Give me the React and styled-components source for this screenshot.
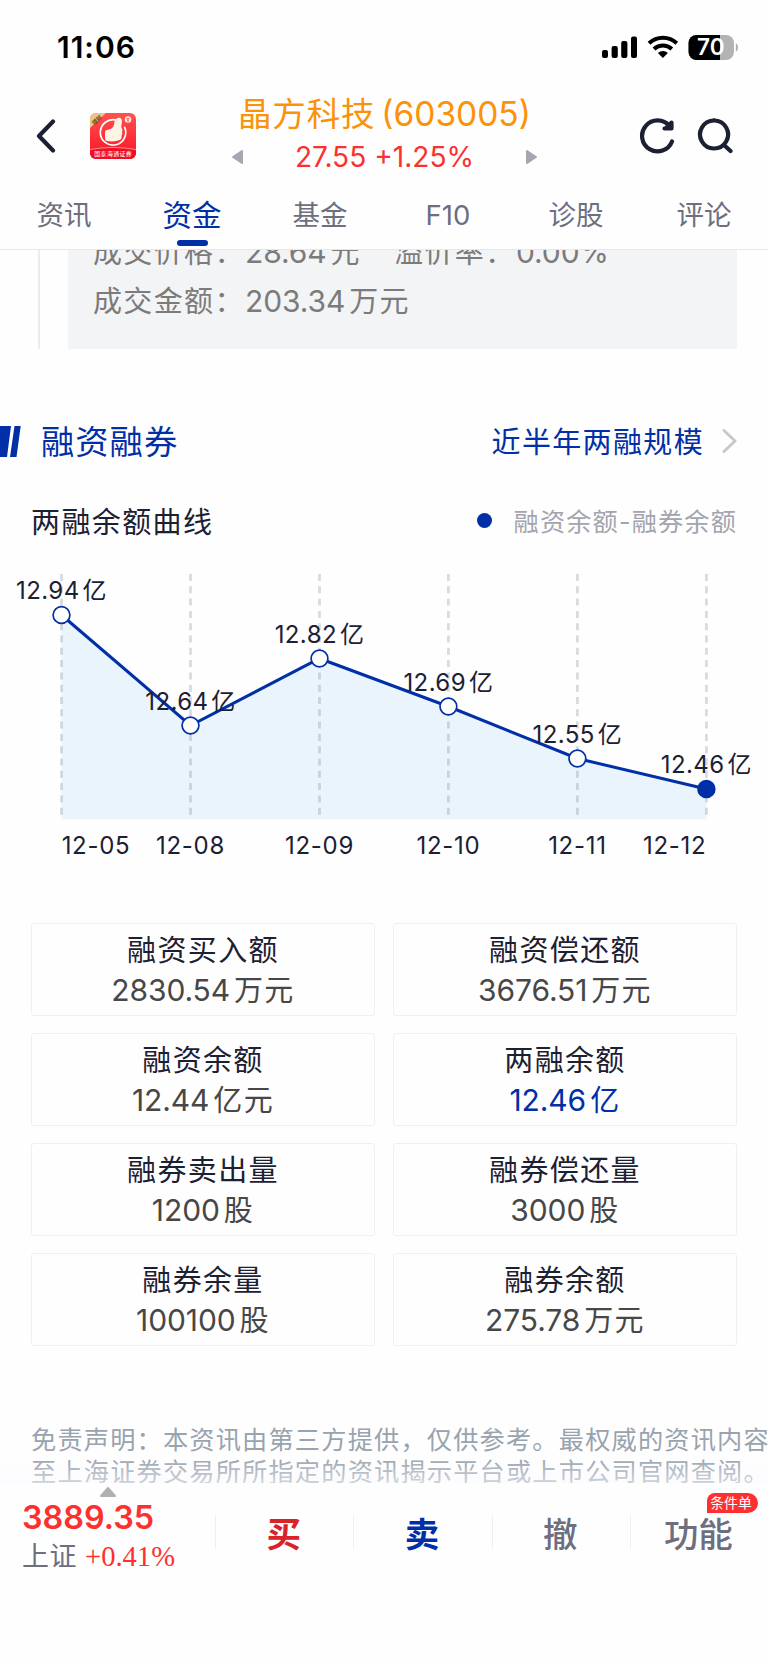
import React from 'react'
import styled, { createGlobalStyle } from 'styled-components'

const GlobalStyle = createGlobalStyle`
  * {
    box-sizing: border-box;
  }
  body {
    margin: 0;
    background: #fefefe;
    font-family: Inter, 'Noto Sans CJK SC', sans-serif;
    color: #1c2033;
  }
`
const Page = styled.div`
  width: 768px;
  height: 1663px;
  display: flex;
  flex-direction: column;
  overflow: hidden;
  white-space: nowrap;
`
const StatusBar = styled.div`
  height: 94px;
  padding: 0 30px 0 57px;
  display: flex;
  align-items: center;
  justify-content: space-between;
  color: #000;
`
const Clock = styled.div`
  font-size: 30px;
  font-weight: 600;
  letter-spacing: 1px;
`
const Header = styled.header`
  height: 84px;
  margin-bottom: 8px;
  padding: 0 35px 0 36px;
  display: flex;
  align-items: center;
  svg {
    display: block;
  }
`
const HeaderSide = styled.div`
  width: 168px;
  height: 84px;
  padding-bottom: 1px;
  display: flex;
  align-items: center;
  gap: ${p => p.gap}px;
  justify-content: ${p => (p.right ? 'flex-end' : 'flex-start')};
`
const Stock = styled.div`
  flex: 1;
  display: flex;
  flex-direction: column;
  align-items: center;
  padding-bottom: 3px;
`
const StockName = styled.div`
  height: 45px;
  display: flex;
  align-items: baseline;
  line-height: 44px;
  font-size: 33.5px;
  letter-spacing: 0.8px;
  color: #fb9207;
  span {
    margin-left: 6px;
    font-size: 33.5px;
    letter-spacing: 0;
  }
`
const StockPrice = styled.div`
  width: 307px;
  height: 40px;
  display: flex;
  align-items: center;
  justify-content: space-between;
  font-size: 28.1px;
  color: #fc312f;
`
const Tabs = styled.nav`
  height: 64px;
  display: grid;
  grid-template-columns: repeat(6, 1fr);
  border-bottom: 1px solid #e6e7e9;
`
const Tab = styled.div`
  display: flex;
  flex-direction: column;
  align-items: center;
  justify-content: space-between;
  padding-bottom: 3px;
  line-height: 59px;
  font-size: ${p => (p.active ? 29.5 : 27.5)}px;
  color: ${p => (p.active ? '#002fa7' : '#6d6f7e')};
  &::after {
    content: '';
    width: 31px;
    height: 6px;
    flex: none;
    margin-top: -5px;
    border-radius: 3px;
    background: ${p => (p.active ? '#002fa7' : 'transparent')};
  }
`
const Content = styled.main`
  height: 1233px;
  position: relative;
  overflow: hidden;
`
const TradeRecord = styled.div`
  height: 99px;
  margin: 0 31px 0 38px;
  padding-left: 28px;
  border-left: 2px solid #ebecee;
`
const TradeBox = styled.div`
  height: 99px;
  display: flex;
  flex-direction: column;
  justify-content: flex-end;
  padding: 0 24px 23px 25px;
  overflow: hidden;
  background: #f3f4f6;
  color: #7b7b7b;
  font-size: 29px;
  line-height: 49px;
`
const TradeLine = styled.div`
  display: flex;
  flex: none;
`
const TradeField = styled.span`
  width: ${p => p.w}px;
  letter-spacing: 1.35px;
`
const Value = styled.span`
  font-size: 30px;
  letter-spacing: -0.1px;
  small {
    margin-left: 4px;
    font-size: 29px;
    letter-spacing: 1.35px;
  }
`
const SectionHead = styled.div`
  height: 54px;
  margin-top: 65px;
  padding-right: 31px;
  display: flex;
  align-items: center;
`
const SectionTitle = styled.h2`
  flex: 1;
  margin: 0 0 0 20px;
  padding-bottom: 3px;
  font-size: 33.3px;
  font-weight: 400;
  letter-spacing: 1px;
  color: #002fa7;
`
const SectionLink = styled.a`
  margin-right: 18px;
  padding-bottom: 2px;
  font-size: 29px;
  letter-spacing: 1.35px;
  color: #002fa7;
`
const ChartHead = styled.div`
  height: 56px;
  margin-top: 24px;
  padding: 0 31px;
  display: flex;
  align-items: center;
  font-size: 29px;
  letter-spacing: 1.4px;
`
const Legend = styled.div`
  margin-left: auto;
  display: flex;
  align-items: center;
  gap: 22px;
  font-size: 25.2px;
  letter-spacing: 1.15px;
  color: #a3a4ad;
  &::before {
    content: '';
    width: 15px;
    height: 15px;
    border-radius: 50%;
    background: #002fa7;
  }
`
const ChartSvg = styled.svg`
  display: block;
  margin-top: 21px;
  font-size: 24px;
  fill: #1c2033;
`
const Grid = styled.div`
  margin: 58px 31px 0;
  display: grid;
  grid-template-columns: 1fr 1fr;
  gap: 17px 18px;
`
const Card = styled.div`
  height: 93px;
  padding-top: 6px;
  display: flex;
  flex-direction: column;
  align-items: center;
  border: 1.5px solid #f0f0f2;
  border-radius: 3px;
`
const CardTitle = styled.div`
  height: 40px;
  line-height: 41px;
  font-size: 29px;
  letter-spacing: 1.35px;
`
const CardValue = styled.div`
  height: 40px;
  line-height: 40px;
  color: ${p => (p.blue ? '#002fa7' : '#474747')};
`
const Disclaimer = styled.p`
  margin: 78px 0 0 31px;
  font-size: 25.2px;
  line-height: 32px;
  letter-spacing: 1.2px;
  color: #98a3ae;
`
const Fade = styled.div`
  position: absolute;
  left: 0;
  right: 0;
  bottom: 0;
  height: 26px;
  background: linear-gradient(rgba(250, 250, 254, 0), rgba(250, 250, 254, 0.55));
`
const BottomBar = styled.footer`
  height: 180px;
  padding-left: 22px;
  display: flex;
  background: #fefefe;
`
const IndexBox = styled.div`
  width: 193px;
  padding-top: 3px;
`
const IndexArrow = styled.svg`
  display: block;
  margin-left: 77px;
`
const IndexValue = styled.div`
  height: 41px;
  line-height: 40px;
  font-size: 32.3px;
  font-weight: 600;
  color: #fc312f;
`
const IndexName = styled.div`
  display: flex;
  align-items: baseline;
  line-height: 36px;
  font-size: 27px;
  letter-spacing: 0.5px;
  color: #6d6f7e;
  span {
    margin-left: 8px;
    font: 28.6px 'Liberation Serif', serif;
    letter-spacing: 0;
    color: #fc312f;
  }
`
const Action = styled.div`
  position: relative;
  flex: 1;
  height: 34px;
  margin-top: 32px;
  padding-right: 2px;
  border-left: 1px solid #efeff5;
  display: flex;
  align-items: center;
  justify-content: center;
  font-size: 34.5px;
  font-weight: ${p => p.weight || 500};
  color: ${p => p.color || '#6d6f7e'};
`
const Badge = styled.span`
  position: absolute;
  top: -22px;
  right: 10px;
  width: 51px;
  height: 20px;
  padding-right: 3px;
  line-height: 20px;
  text-align: center;
  border-radius: 8px 10px 10px 0;
  background: #fc312f;
  color: #fff;
  font-size: 13.8px;
  font-weight: 400;
`

const tabs = ['资讯', '资金', '基金', 'F10', '诊股', '评论']

const points = [
  { x: 61.5, y: 46, value: '12.94', date: '12-05', dateX: 96 },
  { x: 190.5, y: 156.5, value: '12.64', date: '12-08' },
  { x: 319.5, y: 89.5, value: '12.82', date: '12-09' },
  { x: 448.4, y: 137.5, value: '12.69', date: '12-10' },
  { x: 577.4, y: 189.5, value: '12.55', date: '12-11' },
  { x: 706.4, y: 220, value: '12.46', date: '12-12', dateX: 674.6 }
]

const cards = [
  { title: '融资买入额', num: '2830.54', unit: '万元' },
  { title: '融资偿还额', num: '3676.51', unit: '万元' },
  { title: '融资余额', num: '12.44', unit: '亿元' },
  { title: '两融余额', num: '12.46', unit: '亿', blue: true },
  { title: '融券卖出量', num: '1200', unit: '股' },
  { title: '融券偿还量', num: '3000', unit: '股' },
  { title: '融券余量', num: '100100', unit: '股' },
  { title: '融券余额', num: '275.78', unit: '万元' }
]

const StatusIcons = () => (
  <svg width="140" height="30" viewBox="0 0 140 30">
    <rect x="4" y="18" width="6" height="8" rx="2" />
    <rect x="13.6" y="14" width="6.2" height="12" rx="2" />
    <rect x="23.2" y="9" width="6.2" height="17" rx="2" />
    <rect x="33" y="4.5" width="6" height="21.5" rx="2" />
    <g fill="none" stroke="#000" strokeWidth="4">
      <path d="M51 11.3a20.4 20.4 0 0 1 27.8 0" />
      <path d="M56 17a13 13 0 0 1 17.8 0" />
    </g>
    <path d="M64.9 26l-5-5a7.2 7.2 0 0 1 10 0z" />
    <clipPath id="charge">
      <rect x="90" y="0" width="32" height="30" />
    </clipPath>
    <rect x="90.5" y="3" width="45.5" height="25" rx="8" fill="#b3b3b3" />
    <rect
      x="90.5"
      y="3"
      width="45.5"
      height="25"
      rx="8"
      clipPath="url(#charge)"
    />
    <path d="M137.8 11.2a5 5 0 0 1 0 8.6z" fill="#b3b3b3" />
    <text
      x="112.8"
      y="23.3"
      textAnchor="middle"
      fontSize="22.5"
      fontWeight="600"
      fill="#fff"
    >
      70
    </text>
  </svg>
)

const Logo = () => (
  <svg width="46" height="46" viewBox="0 0 46 46">
    <defs>
      <linearGradient id="logoRed" x1="0" y1="0" x2="0" y2="1">
        <stop offset="0" stopColor="#ff514d" />
        <stop offset="1" stopColor="#fb1326" />
      </linearGradient>
      <clipPath id="logoShape">
        <rect width="46" height="46" rx="6" />
      </clipPath>
    </defs>
    <g clipPath="url(#logoShape)">
      <rect width="46" height="46" fill="url(#logoRed)" />
      <path d="M0 0h16L0 15z" fill="#e9c68c" />
      <path d="M0 36.5q23-4 46 0V46H0z" fill="#ee1022" />
      <path d="M0 36.5q23-4 46 0" fill="none" stroke="#ff8d88" />
    </g>
    <path
      d="M26 7.1a12.7 12.7 0 1 0 8.3 6.5"
      fill="none"
      stroke="#fff"
      strokeWidth="1.7"
    />
    <path
      d="M15 19q0-2 3-2.3q4-.2 6-4.7q.4-6 3.5-7q4.5-1 4.5 4l-.8 5q1.8 2.5.8 5q.8 2-.3 4q.3 4-3.700 4.500q-5 1.500-11 .5q-2-.5-2-2.500z"
      fill="#fff3e6"
    />
    <circle cx="38" cy="6.5" r="3.3" fill="#ffe9e2" />
    <path d="M36.5 5l1.5 1.5L39.5 5M38 6.5v2.5" stroke="#f33" fill="none" />
    <text
      x="7"
      y="9"
      fontSize="5.5"
      textAnchor="middle"
      fill="#7a4a1c"
      fontWeight="700"
      transform="rotate(-43 7 7)"
    >
      理财
    </text>
    <text
      x="23.2"
      y="43"
      fontSize="5.9"
      textAnchor="middle"
      fill="#fff"
      letterSpacing=".4"
    >
      国泰海通证券
    </text>
  </svg>
)

const StrokeIcon = ({ w, h, d, color = '#1c2033', weight = 4.2 }) => (
  <svg
    width={w}
    height={h}
    fill="none"
    stroke={color}
    strokeWidth={weight}
    strokeLinecap="round"
    strokeLinejoin="round"
  >
    <path d={d} />
  </svg>
)

const Triangle = ({ d }) => (
  <svg width="12" height="16">
    <path
      d={d}
      fill="#a6a7b0"
      stroke="#a6a7b0"
      strokeWidth="2"
      strokeLinejoin="round"
    />
  </svg>
)

const BalanceChart = () => {
  const line = points.map(p => `${p.x},${p.y}`).join(' ')
  return (
    <ChartSvg width="768" height="296">
      {points.map(p => (
        <line
          key={p.date}
          x1={p.x}
          x2={p.x}
          y1="5"
          y2="250"
          stroke="#d8dbdf"
          strokeWidth="2.8"
          strokeDasharray="7 5.3"
        />
      ))}
      <polygon
        points={`61.5,250.5 ${line} 706.4,250.5`}
        fill="rgba(30, 140, 230, 0.09)"
      />
      <polyline points={line} fill="none" stroke="#002fa7" strokeWidth="3" />
      {points.map((p, i) => (
        <g key={p.date}>
          <circle
            cx={p.x}
            cy={p.y}
            r="8.4"
            fill={i === points.length - 1 ? '#002fa7' : '#fff'}
            stroke="#002fa7"
            strokeWidth="1.7"
          />
          <text x={p.x} y={p.y - 15.7} textAnchor="middle" letterSpacing=".4">
            {p.value}
            <tspan dx="3">亿</tspan>
          </text>
          <text
            x={p.dateX || p.x}
            y="284.5"
            textAnchor="middle"
            letterSpacing=".7"
          >
            {p.date}
          </text>
        </g>
      ))}
    </ChartSvg>
  )
}

const App = () => (
  <Page>
    <GlobalStyle />
    <StatusBar>
      <Clock>11:06</Clock>
      <StatusIcons />
    </StatusBar>
    <Header>
      <HeaderSide gap={34}>
        <StrokeIcon w={20} h={34} d="M17 2.5L3 17L17 31.5" />
        <Logo />
      </HeaderSide>
      <Stock>
        <StockName>
          晶方科技<span>(603005)</span>
        </StockName>
        <StockPrice>
          <Triangle d="M2 8L11 2V14z" />
          27.55 +1.25%
          <Triangle d="M10 8L1 2V14z" />
        </StockPrice>
      </Stock>
      <HeaderSide right gap={21}>
        <StrokeIcon
          w={37}
          h={38}
          d="M33 24.5A15.5 15.5 0 1 1 30.5 9M32.5 5.5V11.5H25.5M31.5 6.5L27 11"
        />
        <StrokeIcon w={36} h={38} d="M17 3.5a14 14 0 1 0 .1 0M27 28L33.5 34" />
      </HeaderSide>
    </Header>
    <Tabs>
      {tabs.map(name => (
        <Tab key={name} active={name === '资金' ? 1 : undefined}>
          {name}
        </Tab>
      ))}
    </Tabs>
    <Content>
      <TradeRecord>
        <TradeBox>
          <TradeLine>
            <TradeField w={152}>成交价格：</TradeField>
            <TradeField w={149}>
              <Value>
                28.64<small>元</small>
              </Value>
            </TradeField>
            <TradeField w={122}>溢价率：</TradeField>
            <Value>0.00%</Value>
          </TradeLine>
          <TradeLine>
            <TradeField w={152}>成交金额：</TradeField>
            <Value>
              203.34<small>万元</small>
            </Value>
          </TradeLine>
        </TradeBox>
      </TradeRecord>
      <SectionHead>
        <svg width="21" height="31" fill="#002fa7">
          <path d="M0 0H11L7 31H0zM14.5 0H20.7L16.5 31H10z" />
        </svg>
        <SectionTitle>融资融券</SectionTitle>
        <SectionLink>近半年两融规模</SectionLink>
        <StrokeIcon
          w={15}
          h={26}
          weight={3}
          color="#c9c9cc"
          d="M2 2.5L13 13L2 23.5"
        />
      </SectionHead>
      <ChartHead>
        两融余额曲线
        <Legend>融资余额-融券余额</Legend>
      </ChartHead>
      <BalanceChart />
      <Grid>
        {cards.map(card => (
          <Card key={card.title}>
            <CardTitle>{card.title}</CardTitle>
            <CardValue blue={card.blue ? 1 : undefined}>
              <Value>
                {card.num}
                <small>{card.unit}</small>
              </Value>
            </CardValue>
          </Card>
        ))}
      </Grid>
      <Disclaimer>
        免责声明：本资讯由第三方提供，仅供参考。最权威的资讯内容
        <br />
        至上海证券交易所所指定的资讯揭示平台或上市公司官网查阅。
      </Disclaimer>
      <Fade />
    </Content>
    <BottomBar>
      <IndexBox>
        <IndexArrow width="18" height="12">
          <path
            d="M9 2L16 10H2z"
            fill="#b0b0b2"
            stroke="#b0b0b2"
            strokeWidth="2"
            strokeLinejoin="round"
          />
        </IndexArrow>
        <IndexValue>3889.35</IndexValue>
        <IndexName>
          上证<span>+0.41%</span>
        </IndexName>
      </IndexBox>
      <Action color="#d9232b" weight={700}>
        买
      </Action>
      <Action color="#002fa7" weight={700}>
        卖
      </Action>
      <Action>撤</Action>
      <Action>
        功能
        <Badge>条件单</Badge>
      </Action>
    </BottomBar>
  </Page>
)

export default App
